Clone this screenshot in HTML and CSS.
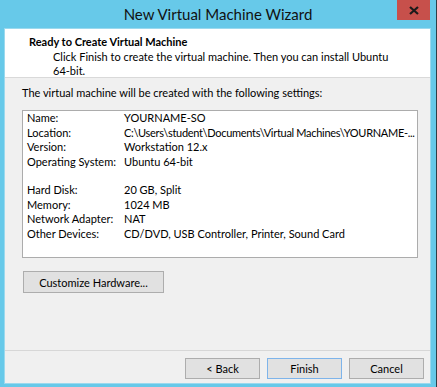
FILE: index.html
```html
<!DOCTYPE html>
<html lang="en">
<head>
    <meta charset="UTF-8">
    <title>New Virtual Machine Wizard</title>
    <link rel="stylesheet" href="styles.css">
</head>
<body>
    <div class="window">
        <div class="titlebar">
            <span class="title">New Virtual Machine Wizard</span>
            <div class="close-btn">
                <svg width="10" height="9" viewBox="0 0 10 9">
                    <path d="M1 1 L9 8 M9 1 L1 8" stroke="#1a1a1a" stroke-width="2.2" fill="none"/>
                </svg>
            </div>
        </div>

        <div class="client">
            <!-- Header -->
            <div class="header">
                <div class="header-title">Ready to Create Virtual Machine</div>
                <div class="header-sub">Click Finish to create the virtual machine. Then you can install Ubuntu<br>64-bit.</div>
            </div>

            <!-- Settings summary -->
            <div class="content">
                <p class="intro">The virtual machine will be created with the following settings:</p>
                <div class="summary">
                    <div class="row"><span class="key">Name:</span><span class="val">YOURNAME-SO</span></div>
                    <div class="row"><span class="key">Location:</span><span class="val path">C:\Users\student\Documents\Virtual Machines\YOURNAME-...</span></div>
                    <div class="row"><span class="key">Version:</span><span class="val">Workstation 12.x</span></div>
                    <div class="row"><span class="key">Operating System:</span><span class="val">Ubuntu 64-bit</span></div>
                    <div class="row blank"></div>
                    <div class="row"><span class="key">Hard Disk:</span><span class="val">20 GB, Split</span></div>
                    <div class="row"><span class="key">Memory:</span><span class="val">1024 MB</span></div>
                    <div class="row"><span class="key">Network Adapter:</span><span class="val">NAT</span></div>
                    <div class="row"><span class="key">Other Devices:</span><span class="val">CD/DVD, USB Controller, Printer, Sound Card</span></div>
                </div>
                <button class="btn btn-customize" type="button">Customize Hardware...</button>
            </div>

            <!-- Footer -->
            <div class="footer">
                <button class="btn" type="button">&lt; Back</button>
                <button class="btn btn-default" type="button">Finish</button>
                <button class="btn" type="button">Cancel</button>
            </div>
        </div>
    </div>
</body>
</html>
```

FILE: styles.css
```css
html, body {
    margin: 0;
    padding: 0;
}

body {
    width: 437px;
    height: 387px;
    overflow: hidden;
    background-color: #67c9e9;
    font-family: Lato, 'Liberation Sans', sans-serif;
    font-size: 11px;
    color: #000;
}

.window {
    width: 436px;
    height: 387px;
    border-right: 1px solid #2f3f46;
    display: flex;
    flex-direction: column;
}

.titlebar {
    height: 28px;
    display: flex;
    align-items: center;
    justify-content: center;
    position: relative;
    flex-shrink: 0;
}

.title {
    font-size: 15px;
    color: #111;
    padding-bottom: 1px;
}

.close-btn {
    position: absolute;
    top: 0;
    left: 397px;
    width: 33px;
    height: 20px;
    background-color: #c7504b;
    display: flex;
    align-items: center;
    justify-content: center;
}

.client {
    margin: 0 5px 3px 4px;
    border: 1px solid #9bd9ee;
    background-color: #f0f0f0;
    flex: 1;
    display: flex;
    flex-direction: column;
}

.header {
    background-color: #fff;
    border-bottom: 1px solid #d9d9d9;
    padding: 4px 0 0 24px;
    box-sizing: border-box;
    height: 49px;
    line-height: 14px;
    white-space: nowrap;
}

.header-title {
    font-weight: bold;
    margin-top: 2px;
}

.header-sub {
    padding-left: 24px;
    margin-top: 1px;
}

.content {
    flex: 1;
    padding: 7px 12px 0 17px;
}

.intro {
    margin: 0 0 10px 0;
    line-height: 15px;
    white-space: nowrap;
}

.summary {
    background-color: #fff;
    border: 1px solid #acacac;
    padding: 0 0 0 4px;
    box-sizing: border-box;
    height: 148px;
    line-height: 14.5px;
    overflow: hidden;
}

.row {
    display: flex;
    white-space: nowrap;
}

.row.blank {
    height: 14px;
}

.key {
    width: 97px;
    flex-shrink: 0;
}

.val.path {
    letter-spacing: -0.3px;
}

.btn {
    font-family: inherit;
    font-size: 11px;
    color: #000;
    background-color: #e1e1e1;
    border: 1px solid #adadad;
    height: 21px;
    width: 75px;
    padding: 0;
    margin: 0;
}

.btn-customize {
    width: 141px;
    margin-top: 13px;
    margin-left: 1px;
    height: 22px;
}

.btn-default {
    border-color: #7eb4ea;
}

.footer {
    border-top: 1px solid #d7d7d7;
    padding: 7px 6px 4px 0;
    display: flex;
    justify-content: flex-end;
    gap: 7px;
}
```
